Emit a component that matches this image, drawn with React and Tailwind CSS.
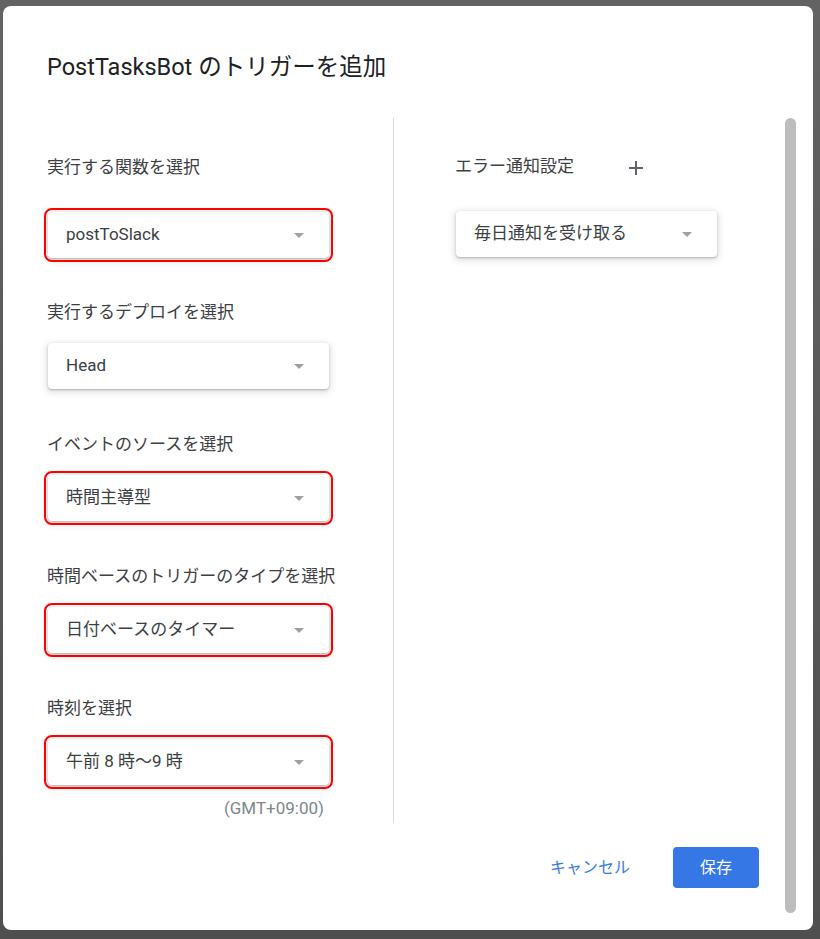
import React from 'react';

const font = { fontFamily: 'Roboto, "Noto Sans CJK JP", sans-serif' };

const Arrow = () => (
  <svg width="10" height="5" viewBox="0 0 10 5" className="shrink-0">
    <path d="M0 0h10L5 5z" fill="#a0a0a0" />
  </svg>
);

const Select = ({ value, marked, className = '' }) => (
  <div
    className={`flex items-center justify-between h-[46px] pl-[18px] pr-[25px] bg-white rounded-[4px] shadow-[0_1px_2px_rgba(60,64,67,0.3),0_2px_6px_2px_rgba(60,64,67,0.15)] ${
      marked ? 'outline-2 outline-offset-2 outline-[#ff0000]' : ''
    } ${className}`}
  >
    <span className="text-[17px] text-[#3c4043]">{value}</span>
    <Arrow />
  </div>
);

const Field = ({ label, value, marked, className = '' }) => (
  <div className={className}>
    <div className="text-[17px] leading-6 text-[#3c4043]">{label}</div>
    <Select value={value} marked={marked} className="mt-[19px] ml-px w-[281px]" />
  </div>
);

export default function App() {
  return (
    <div className="w-full h-[939px] bg-gradient-to-b from-[#636363] to-[#4f4f4f] pt-[6px] pl-[3px]" style={font}>
      <div className="w-[810px] h-[924px] bg-white rounded-[8px] flex flex-col">
        {/* Title */}
        <h1 className="mt-[47px] pl-[44px] text-[23.5px] leading-7 text-[#202124]">
          PostTasksBot のトリガーを追加
        </h1>

        {/* Body */}
        <div className="mt-[37px] flex">
          <div className="w-[782px] flex flex-col">
            <div className="flex h-[705px]">
              {/* Left column */}
              <div className="w-[391px] border-r border-[#dadce0] pl-[44px] pt-[37px]">
                <div>
                  <div className="text-[17px] leading-6 text-[#3c4043]">実行する関数を選択</div>
                  <Select value="postToSlack" marked className="mt-[33px] ml-px w-[281px]" />
                </div>
                <Field label="実行するデプロイを選択" value="Head" className="mt-[42px]" />
                <Field label="イベントのソースを選択" value="時間主導型" marked className="mt-[43px]" />
                <Field label="時間ベースのトリガーのタイプを選択" value="日付ベースのタイマー" marked className="mt-[43px]" />
                <Field label="時刻を選択" value="午前 8 時～9 時" marked className="mt-[43px]" />
                <div className="w-[282px] mt-[12px] text-right pr-[5px] text-[17px] leading-[22px] text-[#80868b]">
                  (GMT+09:00)
                </div>
              </div>

              {/* Right column */}
              <div className="pl-[61px] pt-[37px]">
                <div className="flex items-center h-6">
                  <span className="text-[17px] text-[#3c4043]">エラー通知設定</span>
                  <svg width="16" height="16" viewBox="0 0 16 16" className="ml-[54px] mt-[2px]">
                    <path d="M8 1v14M1 8h14" stroke="#5f6368" strokeWidth="2" />
                  </svg>
                </div>
                <Select value="毎日通知を受け取る" className="mt-[32px] ml-px w-[261px]" />
              </div>
            </div>

            {/* Footer */}
            <div className="mt-[24px] flex items-center justify-end pr-[26px]">
              <button className="text-[16px] text-[#3a7ae6] mr-[43px]">キャンセル</button>
              <button className="w-[86px] h-[41px] rounded-[4px] bg-[#3578e5] text-white text-[16px]">
                保存
              </button>
            </div>
          </div>

          {/* Scrollbar */}
          <div className="w-[11px] h-[795px] rounded-full bg-[#bdbdbd]" />
        </div>
      </div>
    </div>
  );
}
